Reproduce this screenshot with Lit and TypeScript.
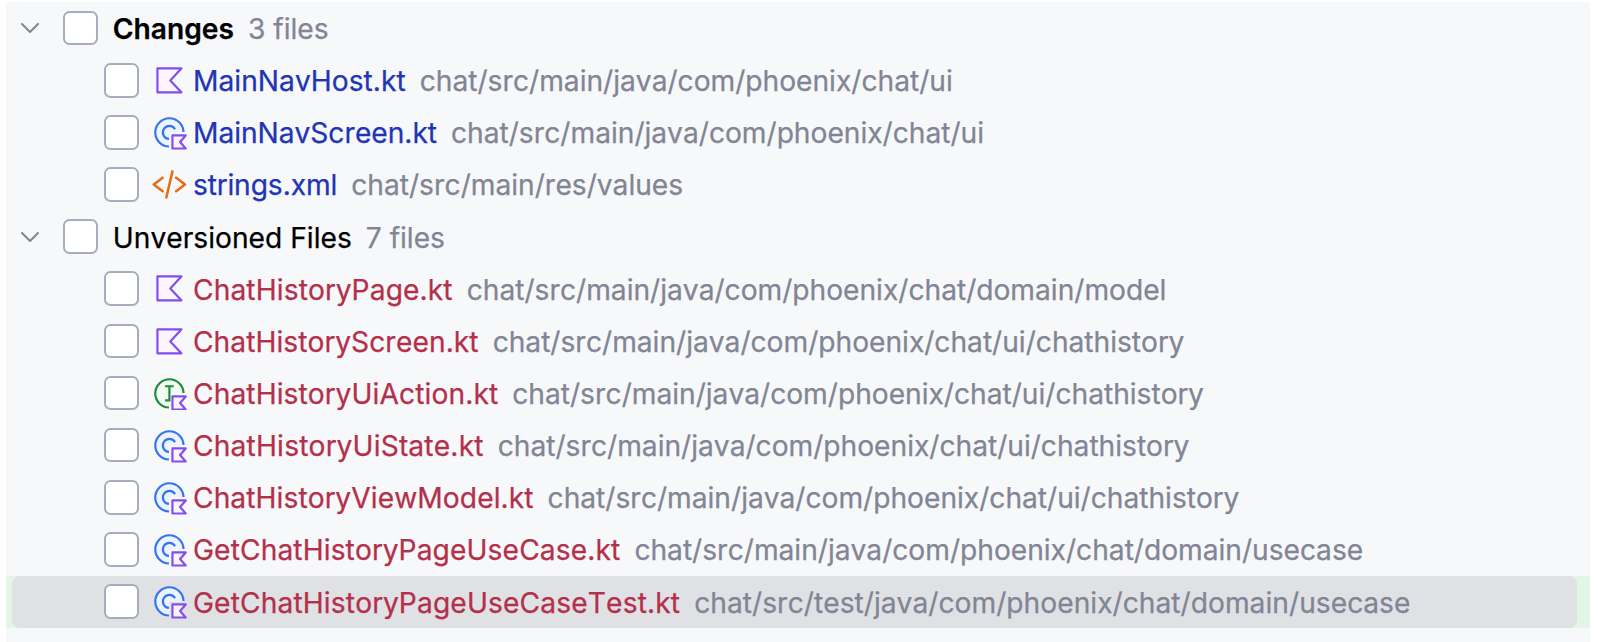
import { LitElement, html, css, svg } from "lit";
import { customElement, property } from "lit/decorators.js";
import { styleMap } from "lit/directives/style-map.js";

type IconKind = "kotlin" | "class" | "interface" | "xml";

interface FileEntry {
  name: string;
  path: string;
  icon: IconKind;
  /** Letter spacing of the file name, in pixels. */
  tracking: number;
  selected?: boolean;
}

interface FileGroup {
  title: string;
  strong: boolean;
  status: "modified" | "unversioned";
  files: FileEntry[];
}

const kotlinBadge = svg`<path d="M9.4 9.4H15.5L12.9 12.4L15.5 15.4H9.4Z" fill="#FAF5FF" stroke="#834DF0" stroke-linejoin="round"/>`;

const icons = {
  kotlin: svg`<path d="M2.5 2.5H13.5L8.4 8L13.5 13.5H2.5Z" fill="#FAF5FF" stroke="#834DF0" stroke-linejoin="round"/>`,
  class: svg`
    <path d="M8 8H14.5A6.5 6.5 0 1 0 8 14.5Z" fill="#EDF3FF"/>
    <path d="M14.5 7.8A6.5 6.5 0 1 0 7.8 14.5" fill="none" stroke="#3574F0"/>
    <path d="M10.6 6.5A3 3 0 1 0 7.8 11" fill="none" stroke="#3574F0"/>
    ${kotlinBadge}`,
  interface: svg`
    <path d="M8 8H14.5A6.5 6.5 0 1 0 8 14.5Z" fill="#F2FCF3"/>
    <path d="M14.5 7.8A6.5 6.5 0 1 0 7.8 14.5" fill="none" stroke="#208A3C"/>
    <path d="M6 4.7H10M8 4.7V11.2M6 11.2H8.5" fill="none" stroke="#208A3C"/>
    ${kotlinBadge}`,
  xml: svg`<path d="M4.9 4.9L0.8 8L4.9 11.1M11.1 4.9L15.2 8L11.1 11.1M9.4 2L6.6 14" fill="none" stroke="#E66D17" stroke-width="1.15" stroke-linecap="round" stroke-linejoin="round"/>`,
};

const MAIN = "chat/src/main/java/com/phoenix/chat";

const groups: FileGroup[] = [
  {
    title: "Changes",
    strong: true,
    status: "modified",
    files: [
      { name: "MainNavHost.kt", path: `${MAIN}/ui`, icon: "kotlin", tracking: 0.02 },
      { name: "MainNavScreen.kt", path: `${MAIN}/ui`, icon: "class", tracking: -0.05 },
      { name: "strings.xml", path: "chat/src/main/res/values", icon: "xml", tracking: -0.1 },
    ],
  },
  {
    title: "Unversioned Files",
    strong: false,
    status: "unversioned",
    files: [
      { name: "ChatHistoryPage.kt", path: `${MAIN}/domain/model`, icon: "kotlin", tracking: 0.1 },
      { name: "ChatHistoryScreen.kt", path: `${MAIN}/ui/chathistory`, icon: "kotlin", tracking: 0.05 },
      { name: "ChatHistoryUiAction.kt", path: `${MAIN}/ui/chathistory`, icon: "interface", tracking: 0.09 },
      { name: "ChatHistoryUiState.kt", path: `${MAIN}/ui/chathistory`, icon: "class", tracking: 0.18 },
      { name: "ChatHistoryViewModel.kt", path: `${MAIN}/ui/chathistory`, icon: "class", tracking: 0.07 },
      { name: "GetChatHistoryPageUseCase.kt", path: `${MAIN}/domain/usecase`, icon: "class", tracking: 0.1 },
      {
        name: "GetChatHistoryPageUseCaseTest.kt",
        path: "chat/src/test/java/com/phoenix/chat/domain/usecase",
        icon: "class",
        tracking: 0.12,
        selected: true,
      },
    ],
  },
];

@customElement("file-icon")
export class FileIcon extends LitElement {
  @property() kind: IconKind = "kotlin";

  static styles = css`
    :host { display: block; flex: none; width: 34.8px; height: 34.8px; }
    .glyph { display: block; width: 100%; height: 100%; }
  `;

  render() {
    return html`<svg class="glyph" viewBox="0 0 16 16">${icons[this.kind]}</svg>`;
  }
}

@customElement("app-root")
export class AppRoot extends LitElement {
  static styles = css`
    :host {
      display: block;
      box-sizing: border-box;
      height: 642px;
      padding: 2px 8px 0 6px;
      background: #fff;
      font-family: Inter, "Noto Sans", sans-serif;
      font-size: 28.2px;
      font-kerning: none;
      -webkit-text-stroke: 0.25px currentColor;
      color: #000;
    }
    .tree { height: 100%; background: #f7f8fa; overflow: hidden; }
    .row { display: flex; height: 52.15px; }
    .row.selected { background: #e3f6e6; }
    .body {
      display: flex;
      align-items: center;
      flex: 1;
      margin: 0 13px 0 6px;
      border-radius: 8px;
    }
    .selected .body { background: #dfe1e5; }
    .chevron { flex: none; width: 18px; height: 10px; margin: 0 23.6px 0 9px; }
    .check {
      flex: none;
      box-sizing: border-box;
      width: 35px;
      height: 34.6px;
      border: 2px solid #a8adbd;
      border-radius: 6.5px;
      background: #fff;
    }
    .file .check { margin-left: 91.6px; margin-right: 13.4px; }
    .label { white-space: pre; line-height: 34px; padding-top: 2px; }
    .group .label { margin-left: 15.2px; }
    .file .label { margin-left: 6.2px; }
    .strong { font-weight: 600; }
    .modified { color: #1f35b5; }
    .unversioned { color: #b4304a; }
    .note { color: #818594; margin-left: 14px; letter-spacing: -0.025px; }
    .selected .note { letter-spacing: 0.01px; }
  `;

  private renderFile(file: FileEntry, status: string) {
    return html`<div class="row file ${file.selected ? "selected" : ""}">
      <div class="body">
        <span class="check"></span>
        <file-icon .kind=${file.icon}></file-icon>
        <div class="label"><span class=${status} style=${styleMap({ letterSpacing: `${file.tracking}px` })}>${file.name}</span><span class="note">${file.path}</span></div>
      </div>
    </div>`;
  }

  private renderGroup(group: FileGroup) {
    return html`<div class="row group">
        <div class="body">
          <svg class="chevron" viewBox="0 0 18 10">
            <path d="M1 1L9 9L17 1" fill="none" stroke="#818594" stroke-width="2" stroke-linecap="round" stroke-linejoin="round"/>
          </svg>
          <span class="check"></span>
          <div class="label"><span class=${group.strong ? "strong" : ""}>${group.title}</span><span class="note">${group.files.length} files</span></div>
        </div>
      </div>
      ${group.files.map((file) => this.renderFile(file, group.status))}`;
  }

  render() {
    return html`<div class="tree">${groups.map((group) => this.renderGroup(group))}</div>`;
  }
}
